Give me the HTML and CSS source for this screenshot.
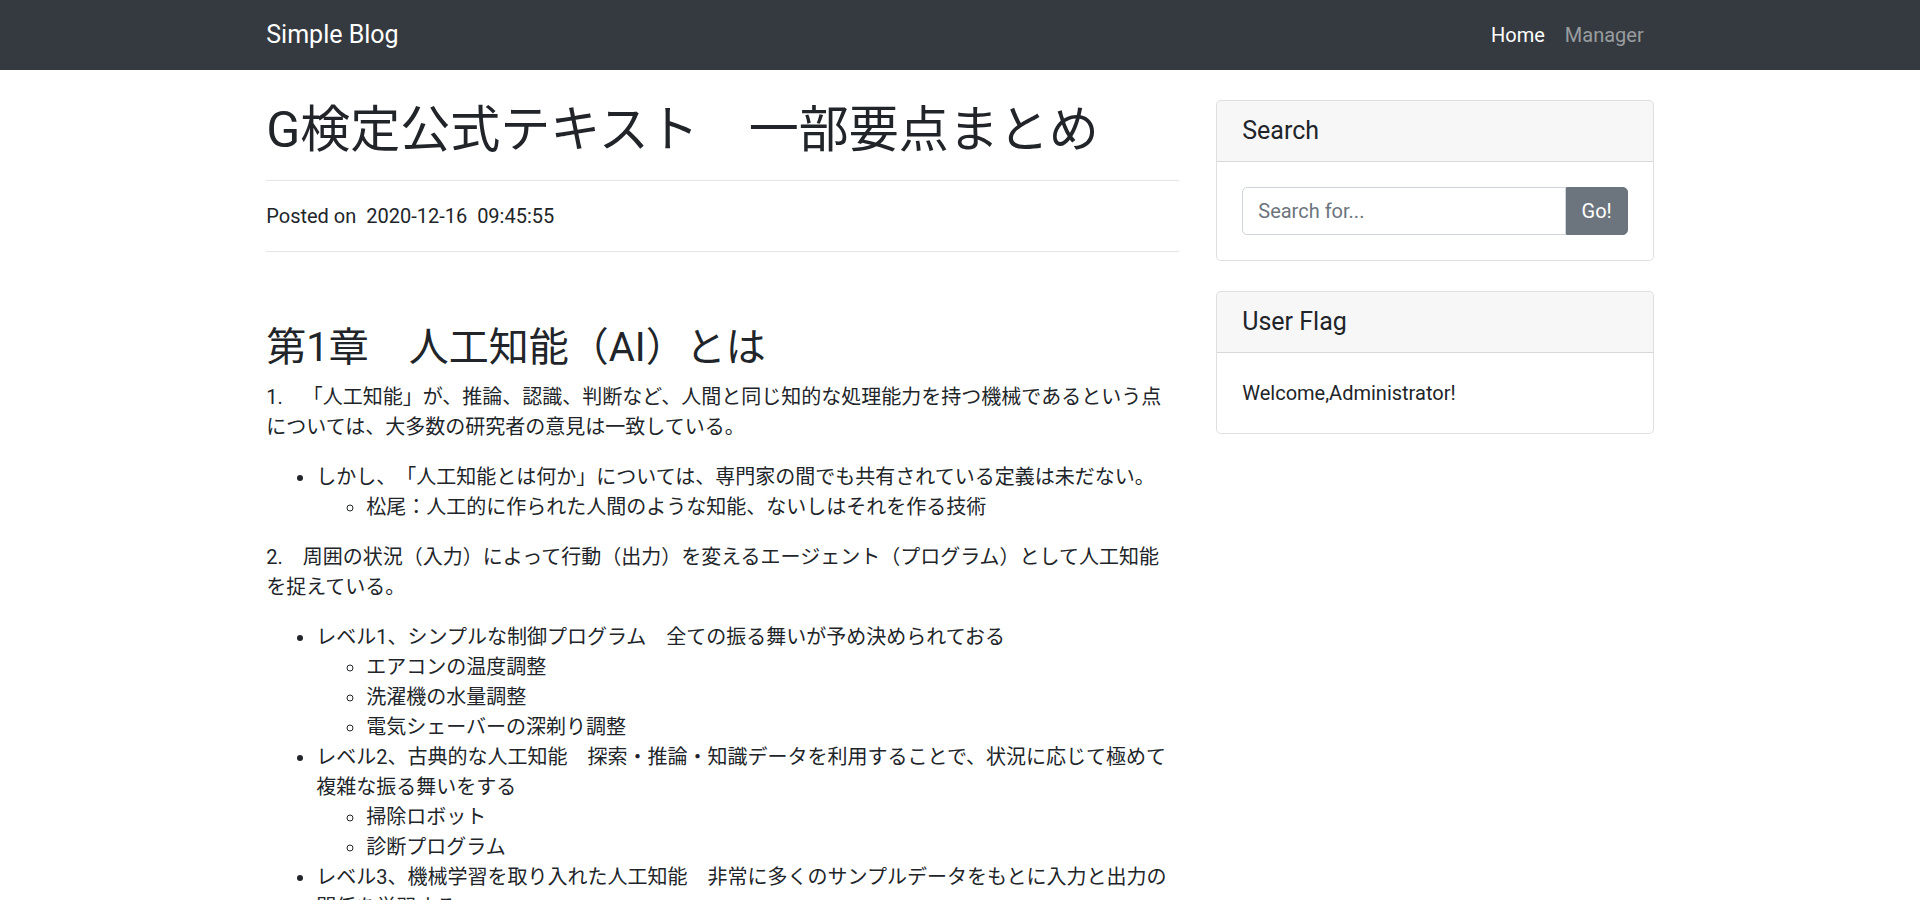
FILE: index.html
```html
<!DOCTYPE html>
<html lang="ja">
<head>
<meta charset="utf-8">
<title>Simple Blog</title>
<link rel="stylesheet" href="styles.css">
</head>
<body>
<nav class="navbar">
  <div class="container navbar-inner">
    <a class="brand" href="#">Simple Blog</a>
    <ul class="nav">
      <li><a class="nav-link active" href="#">Home</a></li>
      <li><a class="nav-link" href="#">Manager</a></li>
    </ul>
  </div>
</nav>
<div class="container">
  <div class="row">
    <main class="col-main">
      <h1 class="post-title">G検定公式テキスト　一部要点まとめ</h1>
      <hr class="rule">
      <p class="meta">Posted on&nbsp; 2020-12-16&nbsp; 09:45:55</p>
      <hr class="rule">
      <div class="post-body">
        <h2 class="chapter">第1章　人工知能（AI）とは</h2>
        <p class="para">1.　「人工知能」が、推論、認識、判断など、人間と同じ知的な処理能力を持つ機械であるという点については、大多数の研究者の意見は一致している。</p>
        <ul class="list">
          <li>しかし、「人工知能とは何か」については、専門家の間でも共有されている定義は未だない。
            <ul class="sublist">
              <li>松尾：人工的に作られた人間のような知能、ないしはそれを作る技術</li>
            </ul>
          </li>
        </ul>
        <p class="para">2.　周囲の状況（入力）によって行動（出力）を変えるエージェント（プログラム）として人工知能を捉えている。</p>
        <ul class="list">
          <li>レベル1、シンプルな制御プログラム　全ての振る舞いが予め決められておる
            <ul class="sublist">
              <li>エアコンの温度調整</li>
              <li>洗濯機の水量調整</li>
              <li>電気シェーバーの深剃り調整</li>
            </ul>
          </li>
          <li>レベル2、古典的な人工知能　探索・推論・知識データを利用することで、状況に応じて極めて複雑な振る舞いをする
            <ul class="sublist">
              <li>掃除ロボット</li>
              <li>診断プログラム</li>
            </ul>
          </li>
          <li>レベル3、機械学習を取り入れた人工知能　非常に多くのサンプルデータをもとに入力と出力の関係を学習する</li>
        </ul>
      </div>
    </main>
    <aside class="col-side">
      <div class="card">
        <h5 class="card-header">Search</h5>
        <div class="card-body">
          <div class="input-group">
            <input class="search-input" type="text" placeholder="Search for...">
            <button class="btn-go" type="button">Go!</button>
          </div>
        </div>
      </div>
      <div class="card">
        <h5 class="card-header">User Flag</h5>
        <div class="card-body">
          <span class="welcome">Welcome,Administrator!</span>
        </div>
      </div>
    </aside>
  </div>
</div>
</body>
</html>
```
FILE: styles.css
```css
* { box-sizing: border-box; }
html, body { margin: 0; padding: 0; }
body {
  font-family: Roboto, "Noto Sans CJK JP", sans-serif;
  font-size: 20px;
  line-height: 1.5;
  color: #212529;
  background: #fff;
  text-spacing-trim: space-all;
}
.container {
  width: 1425px;
  margin: 0 auto;
  padding: 0 18.75px;
}
.navbar {
  background: #343a40;
  padding: 10px 0;
}
.navbar-inner {
  display: flex;
  align-items: center;
  justify-content: space-between;
}
.brand {
  display: inline-block;
  padding: 6.25px 0;
  font-size: 25px;
  line-height: 1.5;
  color: #fff;
  text-decoration: none;
}
.nav {
  display: flex;
  list-style: none;
  margin: 0;
  padding: 0;
}
.nav-link {
  display: block;
  padding: 10px;
  color: rgba(255,255,255,.5);
  text-decoration: none;
}
.nav-link.active { color: #fff; }

.row {
  display: flex;
  margin: 0 -18.75px;
}
.col-main {
  width: 950px;
  padding: 0 18.75px;
}
.col-side {
  width: 475px;
  padding: 0 18.75px;
}
.post-title {
  font-size: 50px;
  line-height: 1.2;
  font-weight: 400;
  margin: 30px 0 10px;
}
.rule {
  height: 0;
  margin: 20px 0;
  border: 0;
  border-top: 1px solid rgba(0,0,0,.1);
}
.meta { margin: 0 0 20px; }
.chapter {
  font-size: 40px;
  line-height: 1.2;
  font-weight: 400;
  margin: 72px 0 10px;
}
.para { margin: 0 0 20px; }
.list {
  margin: 0 0 20px;
  padding-left: 50px;
  list-style: disc;
}
.sublist {
  margin: 0;
  padding-left: 50px;
  list-style: circle;
}

.card {
  margin: 30px 0;
  border: 1px solid rgba(0,0,0,.125);
  border-radius: 5px;
  background: #fff;
}
.card-header {
  margin: 0;
  padding: 15px 25px;
  font-size: 25px;
  line-height: 1.2;
  font-weight: 400;
  background: rgba(0,0,0,.03);
  border-bottom: 1px solid rgba(0,0,0,.125);
  border-radius: 4px 4px 0 0;
}
.card-body { padding: 25px; }
.input-group { display: flex; }
.search-input {
  flex: 1;
  min-width: 0;
  height: 47.5px;
  padding: 7.5px 15px;
  font-family: Roboto, "Noto Sans CJK JP", sans-serif;
  font-size: 20px;
  line-height: 1.5;
  color: #495057;
  border: 1px solid #ced4da;
  border-radius: 5px 0 0 5px;
  outline: none;
}
.search-input::placeholder { color: #6c757d; }
.btn-go {
  height: 47.5px;
  padding: 7.5px 15px;
  font-family: Roboto, "Noto Sans CJK JP", sans-serif;
  font-size: 20px;
  line-height: 1.5;
  color: #fff;
  background: #6c757d;
  border: 1px solid #6c757d;
  border-radius: 0 5px 5px 0;
}
.welcome { display: block; }
```
